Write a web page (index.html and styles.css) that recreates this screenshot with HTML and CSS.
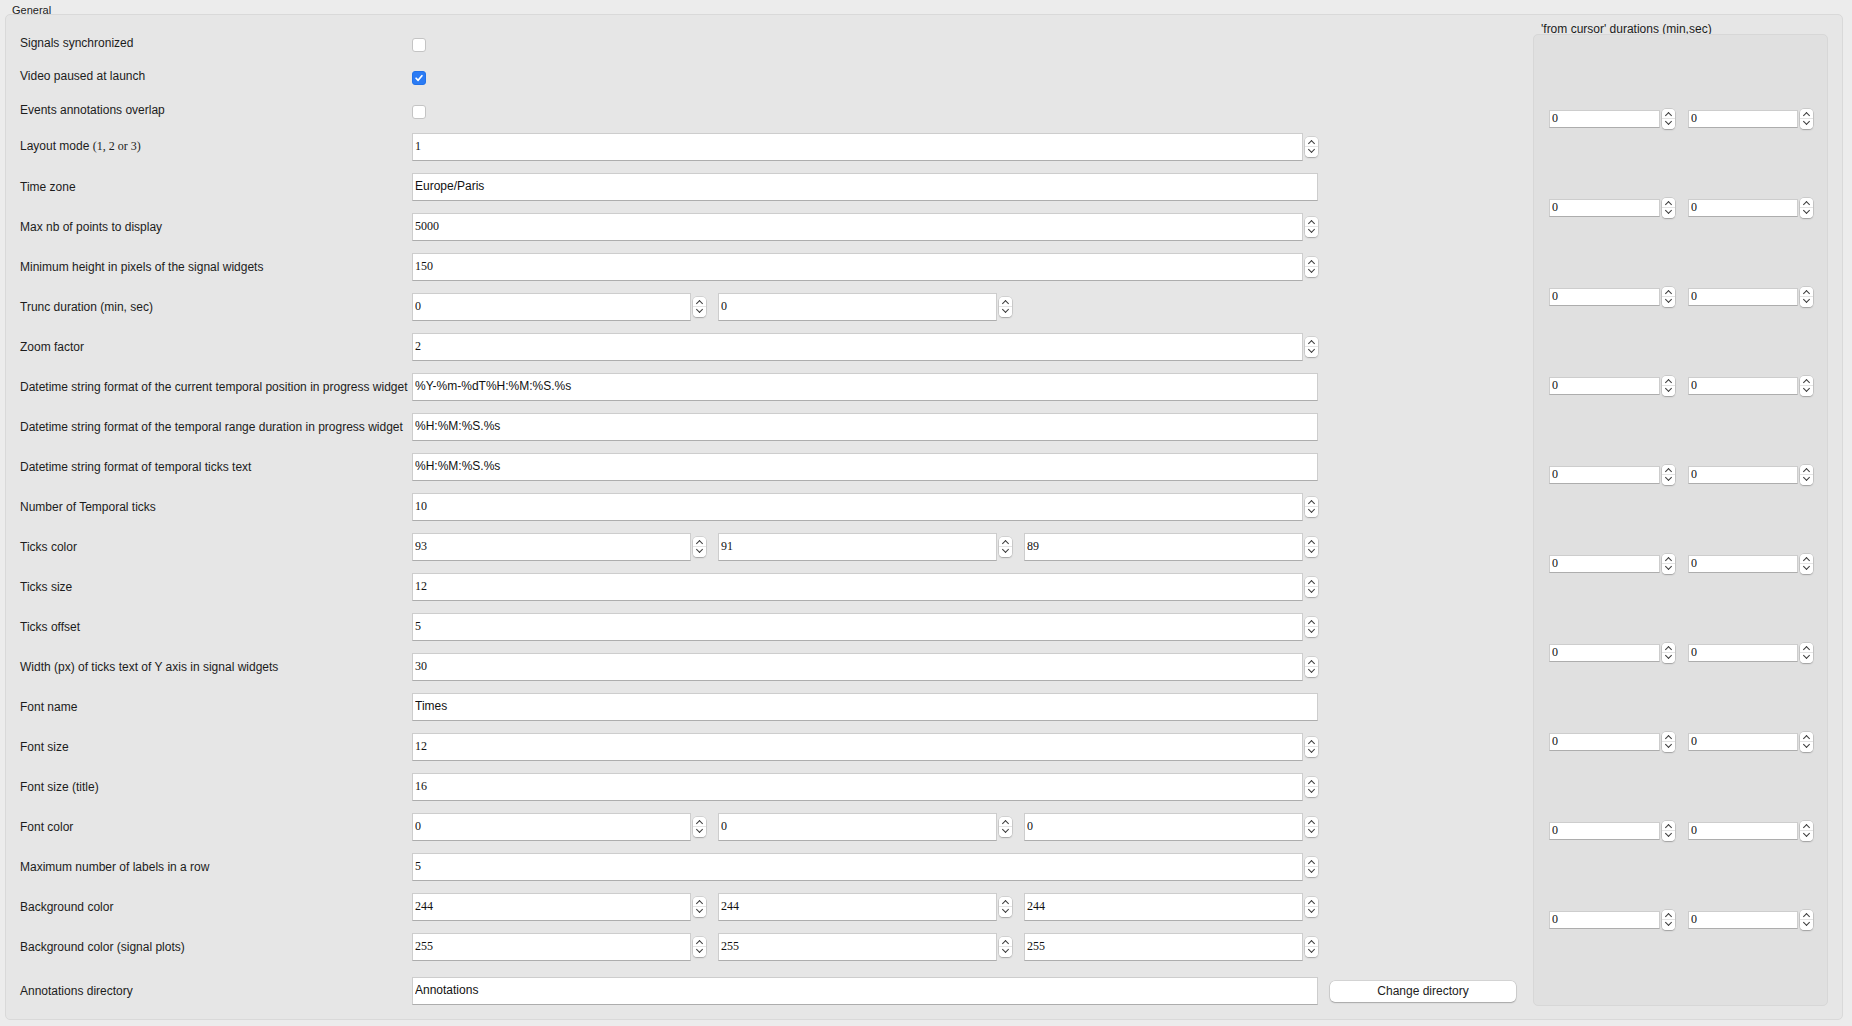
FILE: index.html
```html
<!DOCTYPE html>
<html lang="en">
<head>
    <meta charset="UTF-8">
    <meta name="viewport" content="width=device-width, initial-scale=1.0">
    <title>Preferences</title>
    <link rel="stylesheet" href="styles.css">
</head>
<body>
    <div class="group-title">General</div>
    <div class="group">
        <div class="form">
            <div class="row check-row">
                <label class="label">Signals synchronized</label>
                <div class="field"><span class="check"></span></div>
            </div>
            <div class="row check-row">
                <label class="label">Video paused at launch</label>
                <div class="field">
                    <span class="check checked">
                        <svg viewBox="0 0 14 14"><path d="M3.6 7.3 6 9.7 10.4 4.3"/></svg>
                    </span>
                </div>
            </div>
            <div class="row check-row">
                <label class="label">Events annotations overlap</label>
                <div class="field"><span class="check"></span></div>
            </div>

            <div class="row">
                <label class="label">Layout mode <span class="serif">(1, 2 or 3)</span></label>
                <div class="spin-box"><input class="spin-input" value="1" readonly><span class="spinner"></span></div>
            </div>
            <div class="row">
                <label class="label">Time zone</label>
                <input class="edit" value="Europe/Paris" readonly>
            </div>
            <div class="row">
                <label class="label">Max nb of points to display</label>
                <div class="spin-box"><input class="spin-input" value="5000" readonly><span class="spinner"></span></div>
            </div>
            <div class="row">
                <label class="label">Minimum height in pixels of the signal widgets</label>
                <div class="spin-box"><input class="spin-input" value="150" readonly><span class="spinner"></span></div>
            </div>
            <div class="row">
                <label class="label">Trunc duration (min, sec)</label>
                <div class="triple">
                    <div class="spin-box"><input class="spin-input" value="0" readonly><span class="spinner"></span></div>
                    <div class="spin-box"><input class="spin-input" value="0" readonly><span class="spinner"></span></div>
                </div>
            </div>
            <div class="row">
                <label class="label">Zoom factor</label>
                <div class="spin-box"><input class="spin-input" value="2" readonly><span class="spinner"></span></div>
            </div>
            <div class="row">
                <label class="label">Datetime string format of the current temporal position in progress widget</label>
                <input class="edit" value="%Y-%m-%dT%H:%M:%S.%s" readonly>
            </div>
            <div class="row">
                <label class="label">Datetime string format of the temporal range duration in progress widget</label>
                <input class="edit" value="%H:%M:%S.%s" readonly>
            </div>
            <div class="row">
                <label class="label">Datetime string format of temporal ticks text</label>
                <input class="edit" value="%H:%M:%S.%s" readonly>
            </div>
            <div class="row">
                <label class="label">Number of Temporal ticks</label>
                <div class="spin-box"><input class="spin-input" value="10" readonly><span class="spinner"></span></div>
            </div>
            <div class="row">
                <label class="label">Ticks color</label>
                <div class="triple">
                    <div class="spin-box"><input class="spin-input" value="93" readonly><span class="spinner"></span></div>
                    <div class="spin-box"><input class="spin-input" value="91" readonly><span class="spinner"></span></div>
                    <div class="spin-box"><input class="spin-input" value="89" readonly><span class="spinner"></span></div>
                </div>
            </div>
            <div class="row">
                <label class="label">Ticks size</label>
                <div class="spin-box"><input class="spin-input" value="12" readonly><span class="spinner"></span></div>
            </div>
            <div class="row">
                <label class="label">Ticks offset</label>
                <div class="spin-box"><input class="spin-input" value="5" readonly><span class="spinner"></span></div>
            </div>
            <div class="row">
                <label class="label">Width (px) of ticks text of Y axis in signal widgets</label>
                <div class="spin-box"><input class="spin-input" value="30" readonly><span class="spinner"></span></div>
            </div>
            <div class="row">
                <label class="label">Font name</label>
                <input class="edit" value="Times" readonly>
            </div>
            <div class="row">
                <label class="label">Font size</label>
                <div class="spin-box"><input class="spin-input" value="12" readonly><span class="spinner"></span></div>
            </div>
            <div class="row">
                <label class="label">Font size (title)</label>
                <div class="spin-box"><input class="spin-input" value="16" readonly><span class="spinner"></span></div>
            </div>
            <div class="row">
                <label class="label">Font color</label>
                <div class="triple">
                    <div class="spin-box"><input class="spin-input" value="0" readonly><span class="spinner"></span></div>
                    <div class="spin-box"><input class="spin-input" value="0" readonly><span class="spinner"></span></div>
                    <div class="spin-box"><input class="spin-input" value="0" readonly><span class="spinner"></span></div>
                </div>
            </div>
            <div class="row">
                <label class="label">Maximum number of labels in a row</label>
                <div class="spin-box"><input class="spin-input" value="5" readonly><span class="spinner"></span></div>
            </div>
            <div class="row">
                <label class="label">Background color</label>
                <div class="triple">
                    <div class="spin-box"><input class="spin-input" value="244" readonly><span class="spinner"></span></div>
                    <div class="spin-box"><input class="spin-input" value="244" readonly><span class="spinner"></span></div>
                    <div class="spin-box"><input class="spin-input" value="244" readonly><span class="spinner"></span></div>
                </div>
            </div>
            <div class="row">
                <label class="label">Background color (signal plots)</label>
                <div class="triple">
                    <div class="spin-box"><input class="spin-input" value="255" readonly><span class="spinner"></span></div>
                    <div class="spin-box"><input class="spin-input" value="255" readonly><span class="spinner"></span></div>
                    <div class="spin-box"><input class="spin-input" value="255" readonly><span class="spinner"></span></div>
                </div>
            </div>
            <div class="row last-row">
                <label class="label">Annotations directory</label>
                <input class="edit" value="Annotations" readonly>
                <button class="btn">Change directory</button>
            </div>
        </div>

        <div class="side">
            <div class="side-title">'from cursor' durations (min,sec)</div>
            <div class="side-box">
                <div class="side-row">
                    <div class="spin-box small"><input class="spin-input" value="0" readonly><span class="spinner"></span></div>
                    <div class="spin-box small"><input class="spin-input" value="0" readonly><span class="spinner"></span></div>
                </div>
                <div class="side-row">
                    <div class="spin-box small"><input class="spin-input" value="0" readonly><span class="spinner"></span></div>
                    <div class="spin-box small"><input class="spin-input" value="0" readonly><span class="spinner"></span></div>
                </div>
                <div class="side-row">
                    <div class="spin-box small"><input class="spin-input" value="0" readonly><span class="spinner"></span></div>
                    <div class="spin-box small"><input class="spin-input" value="0" readonly><span class="spinner"></span></div>
                </div>
                <div class="side-row">
                    <div class="spin-box small"><input class="spin-input" value="0" readonly><span class="spinner"></span></div>
                    <div class="spin-box small"><input class="spin-input" value="0" readonly><span class="spinner"></span></div>
                </div>
                <div class="side-row">
                    <div class="spin-box small"><input class="spin-input" value="0" readonly><span class="spinner"></span></div>
                    <div class="spin-box small"><input class="spin-input" value="0" readonly><span class="spinner"></span></div>
                </div>
                <div class="side-row">
                    <div class="spin-box small"><input class="spin-input" value="0" readonly><span class="spinner"></span></div>
                    <div class="spin-box small"><input class="spin-input" value="0" readonly><span class="spinner"></span></div>
                </div>
                <div class="side-row">
                    <div class="spin-box small"><input class="spin-input" value="0" readonly><span class="spinner"></span></div>
                    <div class="spin-box small"><input class="spin-input" value="0" readonly><span class="spinner"></span></div>
                </div>
                <div class="side-row">
                    <div class="spin-box small"><input class="spin-input" value="0" readonly><span class="spinner"></span></div>
                    <div class="spin-box small"><input class="spin-input" value="0" readonly><span class="spinner"></span></div>
                </div>
                <div class="side-row">
                    <div class="spin-box small"><input class="spin-input" value="0" readonly><span class="spinner"></span></div>
                    <div class="spin-box small"><input class="spin-input" value="0" readonly><span class="spinner"></span></div>
                </div>
                <div class="side-row">
                    <div class="spin-box small"><input class="spin-input" value="0" readonly><span class="spinner"></span></div>
                    <div class="spin-box small"><input class="spin-input" value="0" readonly><span class="spinner"></span></div>
                </div>
            </div>
        </div>
    </div>
</body>
</html>
```

FILE: styles.css
```css
* {
    box-sizing: border-box;
}

body {
    margin: 0;
    padding-top: 4px;
    background-color: #ececec;
    font-family: "Liberation Sans", Arial, sans-serif;
    font-size: 12px;
    color: #1c1c1c;
}

.serif {
    font-family: "Liberation Serif", "Times New Roman", serif;
}

.group-title {
    margin-left: 12px;
    font-size: 11px;
    line-height: 12px;
    height: 10px;
}

/* main group box */
.group {
    display: flex;
    margin-left: 5px;
    width: 1838px;
    height: 1006px;
    background-color: #e6e6e6;
    border: 1px solid #d9d9d9;
    border-radius: 5px;
    padding: 0 14px;
}

.form {
    padding-top: 12px;
    width: 1496px;
}

.row {
    display: grid;
    grid-template-columns: 380px 906px 186px;
    column-gap: 12px;
    align-items: center;
    height: 40px;
}

.check-row {
    height: 33px;
}

.check-row + .check-row + .check-row {
    height: 34px;
}

.last-row {
    margin-top: 4px;
}

.label {
    white-space: nowrap;
    padding-bottom: 1px;
}

.field {
    display: flex;
    align-items: center;
}

/* checkboxes */
.check {
    display: inline-flex;
    width: 14px;
    height: 14px;
    margin-top: 3px;
    background-color: #fff;
    border: 1px solid #c4c4c4;
    border-radius: 3px;
}

.check.checked {
    background-color: #2b7bf4;
    border-color: #2272ea;
}

.check svg {
    width: 12px;
    height: 12px;
    fill: none;
    stroke: #fff;
    stroke-width: 2;
    stroke-linecap: round;
    stroke-linejoin: round;
}

/* line edits and spin boxes */
.edit,
.spin-input {
    height: 28px;
    margin: 0;
    padding: 0 2px 2px;
    background-color: #fff;
    border: 1px solid #cdcdcd;
    border-bottom-color: #adadad;
    border-radius: 0;
    font-family: "Liberation Sans", Arial, sans-serif;
    font-size: 12px;
    color: #111;
    outline: none;
}

.edit {
    width: 906px;
}

.spin-box {
    display: flex;
    align-items: center;
    gap: 2px;
}

.spin-input {
    flex: 1;
    min-width: 0;
    font-family: "Liberation Serif", "Times New Roman", serif;
}

.spinner {
    position: relative;
    flex: none;
    width: 13px;
    height: 20px;
    border-radius: 4px;
    background: linear-gradient(#fff 9px, #e4e4e4 9px, #e4e4e4 10px, #fff 10px);
    box-shadow: 0 0 0 0.5px rgba(0, 0, 0, 0.18), 0 1px 1.5px rgba(0, 0, 0, 0.22);
}

/* up / down chevrons */
.spinner::before,
.spinner::after {
    content: "";
    position: absolute;
    left: 4px;
    width: 4px;
    height: 4px;
    border: 1.5px solid #3a3a3a;
    transform: rotate(45deg);
}

.spinner::before {
    top: 4px;
    border-right: none;
    border-bottom: none;
}

.spinner::after {
    top: 10px;
    border-left: none;
    border-top: none;
}

.triple {
    display: grid;
    grid-template-columns: repeat(3, 1fr);
    column-gap: 12px;
}

.btn {
    height: 21px;
    margin: 0;
    padding: 0;
    background-color: #fff;
    border: none;
    border-radius: 5px;
    box-shadow: 0 0 0 0.5px rgba(0, 0, 0, 0.16), 0 1px 1.5px rgba(0, 0, 0, 0.22);
    font-family: "Liberation Sans", Arial, sans-serif;
    font-size: 12px;
    color: #1c1c1c;
}

/* right hand panel */
.side {
    display: flex;
    flex-direction: column;
    width: 295px;
    margin-left: 17px;
    padding-top: 7px;
    padding-bottom: 13px;
}

.side-title {
    margin-left: 8px;
    margin-bottom: -2px;
    font-size: 12px;
    line-height: 14px;
}

.side-box {
    flex: 1;
    display: flex;
    flex-direction: column;
    gap: 69px;
    padding: 74px 14px 0 15px;
    background-color: #e0e0e0;
    border: 1px solid #d7d7d7;
    border-radius: 5px;
}

.side-row {
    display: grid;
    grid-template-columns: 126px 125px;
    column-gap: 13px;
    height: 20px;
    align-items: center;
}

.spin-box.small .spin-input {
    height: 18px;
    padding: 0 2px 1px;
}
```
